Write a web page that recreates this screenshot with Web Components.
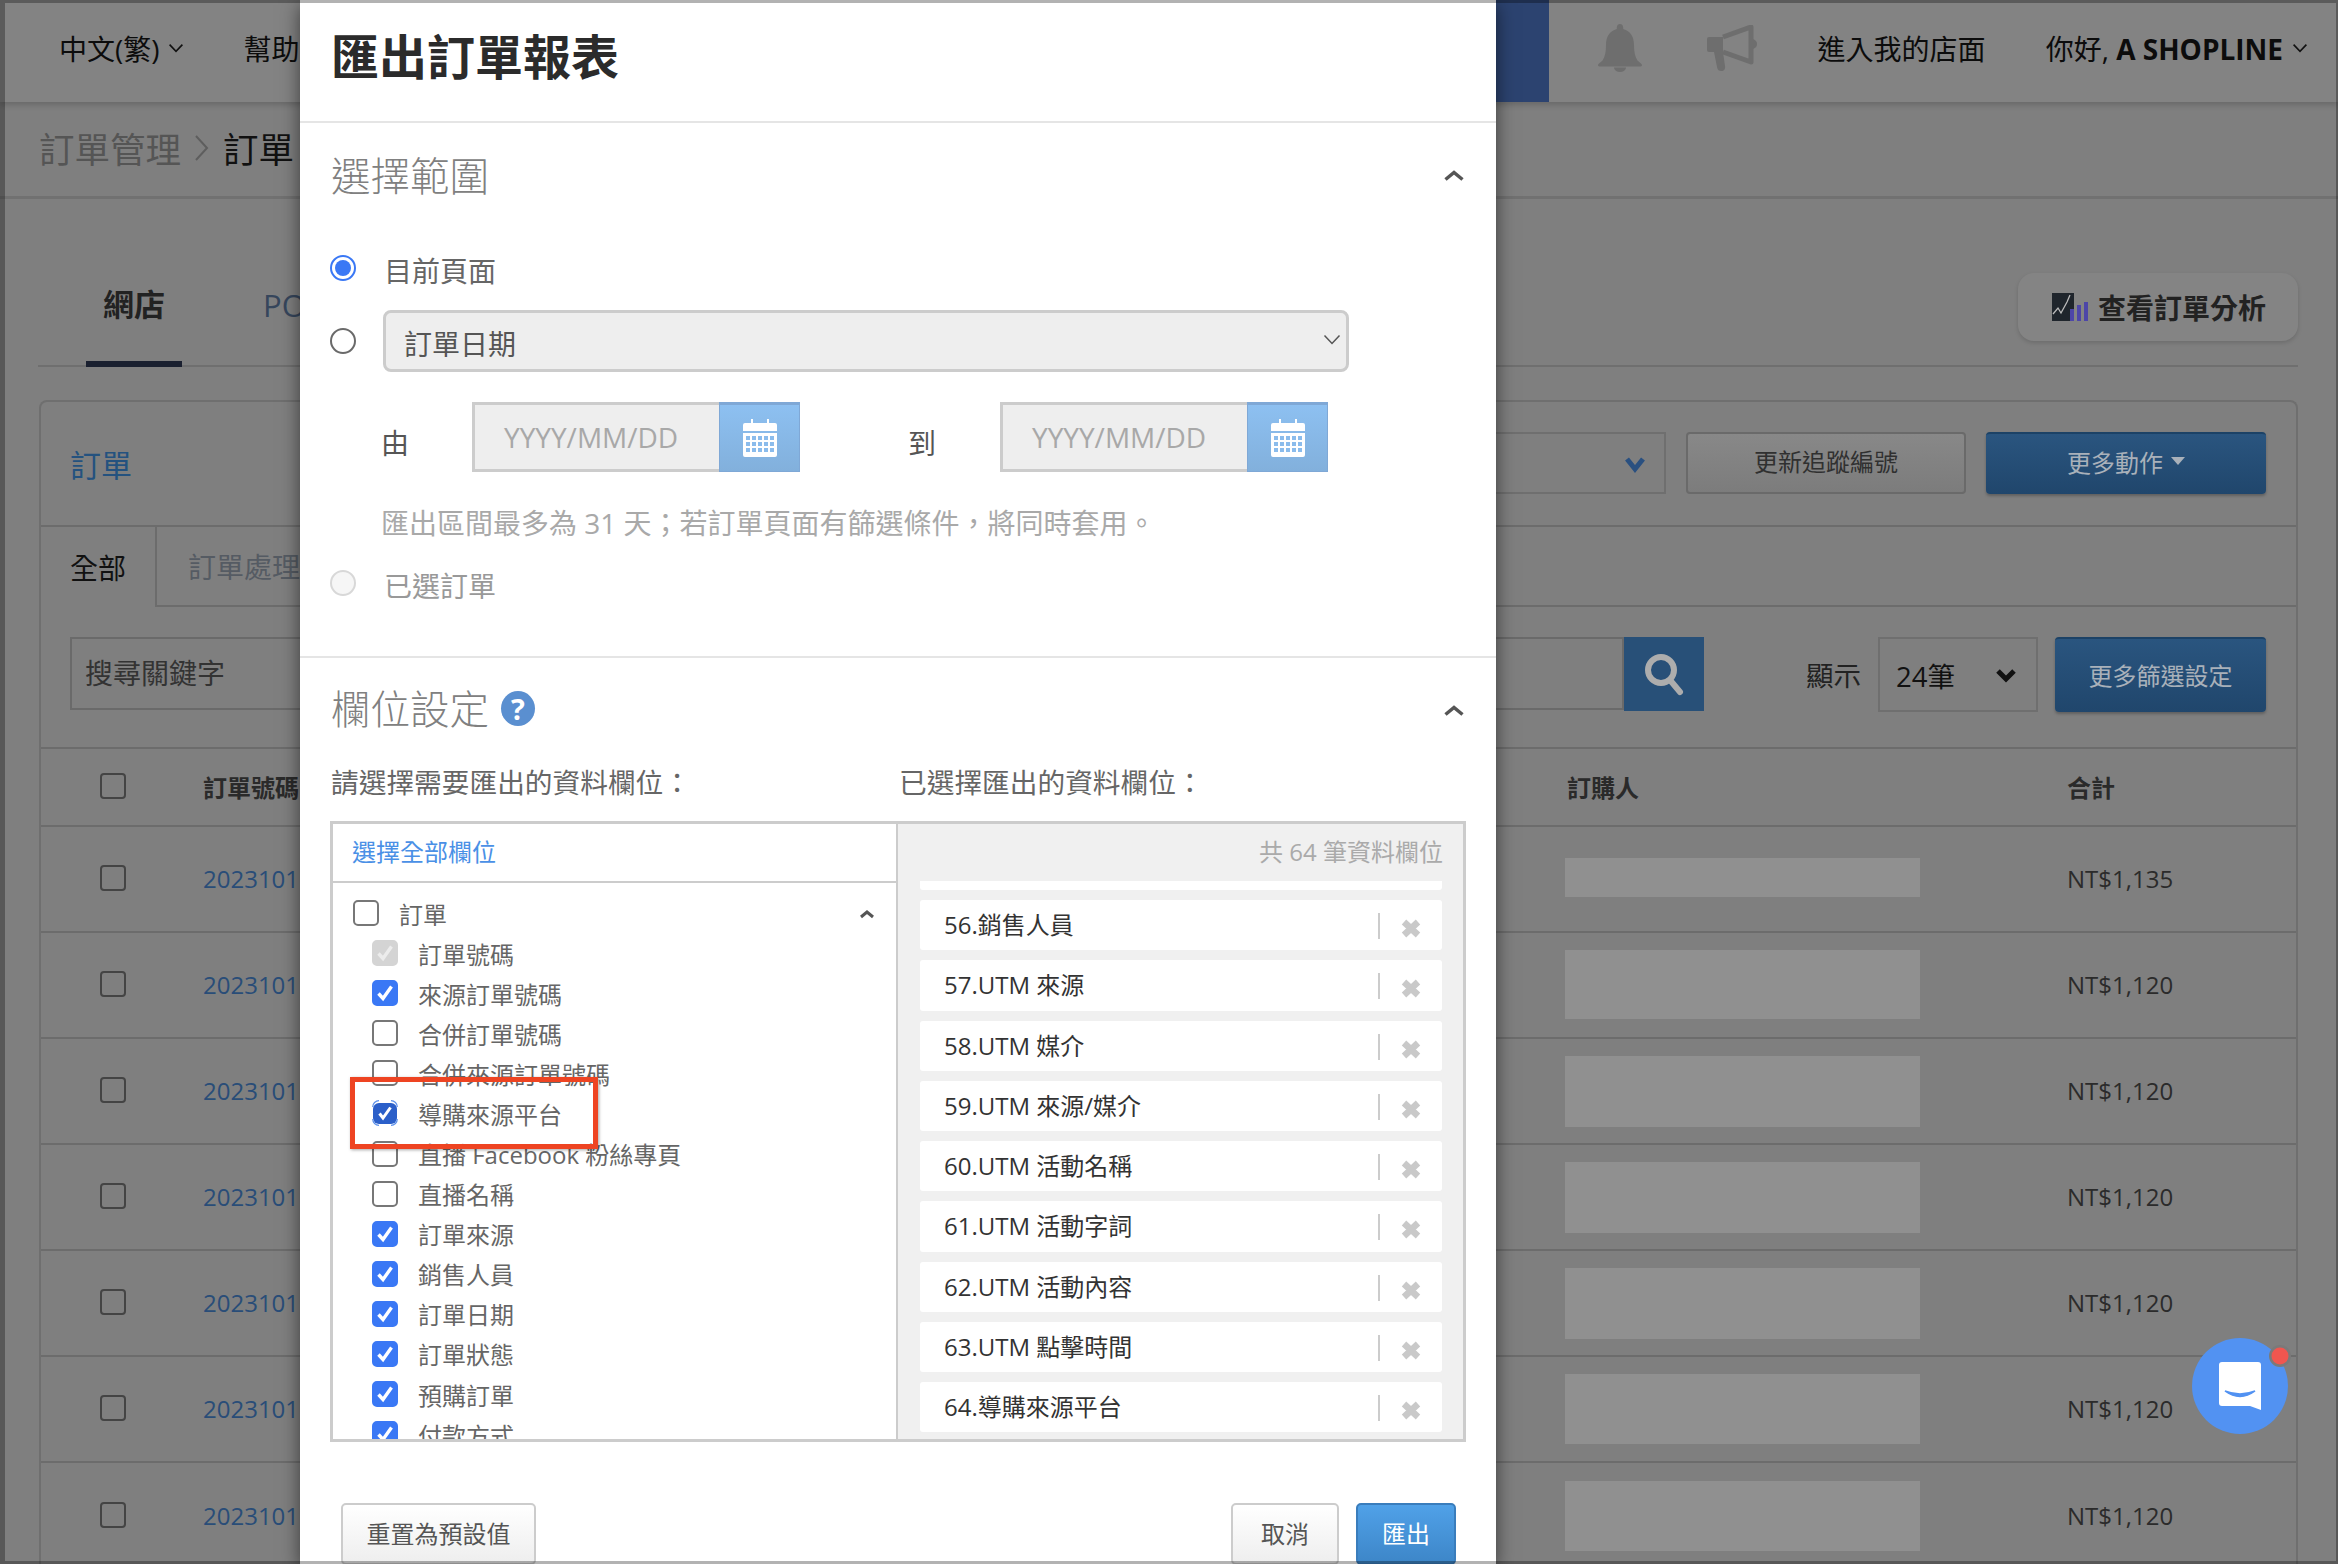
<!DOCTYPE html>
<html lang="zh-Hant">
<head>
<meta charset="utf-8">
<title>匯出訂單報表</title>
<style>
html,body{margin:0;padding:0;width:2338px;height:1564px;overflow:hidden;background:#7f7f7f}
body{font-family:"Open Sans","Noto Sans CJK TC",sans-serif;font-size:28px;color:#222;position:relative}
</style>
</head>
<body>
<shop-page></shop-page>
<export-modal></export-modal>
<chat-bubble></chat-bubble>
<red-mark></red-mark>
<window-frame></window-frame>
<script>
function def(name, css, html){
  customElements.define(name, class extends HTMLElement{
    connectedCallback(){
      if(this.shadowRoot) return;
      const r=this.attachShadow({mode:'open'});
      r.innerHTML=`<style>:host{display:block;box-sizing:border-box}*{box-sizing:border-box}${css}</style>`+(typeof html==='function'?html(this):html);
    }
  });
}
const chev=(w,h,c,sw,up)=>`<svg width="${w}" height="${h}" viewBox="0 0 ${w} ${h}" style="display:block;flex:none"><path d="${up?`M${sw} ${h-sw}L${w/2} ${sw}L${w-sw} ${h-sw}`:`M${sw} ${sw}L${w/2} ${h-sw}L${w-sw} ${sw}`}" fill="none" stroke="${c}" stroke-width="${sw}"/></svg>`;
const cal=`<svg width="34" height="38" viewBox="0 0 34 38" style="display:block"><path d="M8 0h2v5H8zM24 0h2v5h-2z" fill="#fff"/><path d="M0 6a2 2 0 0 1 2-2h30a2 2 0 0 1 2 2v6H0zM0 14h34v22a2 2 0 0 1-2 2H2a2 2 0 0 1-2-2z" fill="#fff"/><g fill="#8bbcec">${[17,23,29].map(y=>[3,9,15,21,27].map(x=>`<rect x="${x}" y="${y}" width="4" height="4"/>`).join('')).join('')}</g></svg>`;

/* ---------- background page ---------- */
def('top-bar',`
:host{height:102px;padding-bottom:6px;background:#838383;display:flex;align-items:center;box-shadow:0 3px 6px rgba(0,0,0,.18);position:relative;color:#0c0c0c;font-size:28px}
.lang{margin-left:59px;display:flex;align-items:center;gap:8px}
.help{margin-left:60px;width:120px;white-space:nowrap}
.sp{flex:1}
.blue{width:100px;height:102px;background:#2c4370;align-self:flex-start}
.bell{margin-left:49px}.horn{margin-left:65px}
.store{margin-left:61px}
.hello{margin-left:60px;display:flex;align-items:center;gap:9px;margin-right:30px}
b{font-weight:700}
`,()=>`
<div class="lang">中文(繁)${chev(16,10,'#111',1.6)}</div><div class="help">幫助</div><div class="sp"></div><div class="blue"></div>
<svg class="bell" width="44" height="48" viewBox="0 0 44 48"><path d="M22 0c-2 0-3.200 1.600-3.200 3.500v1.600C11.500 7 8 13 8 21c0 7-1 12-3.500 15.500C2.800 38.500 0 39.500 0 41c0 1 1 1.500 2 1.500h40c1 0 2-.5 2-1.500 0-1.500-2.800-2.500-4.500-4.500C37 33 36 28 36 21c0-8-3.500-14-10.800-15.900V3.500C25.200 1.600 24 0 22 0z" fill="#6e6e6e"/><path d="M16 43.500a6 4.500 0 0 0 12 0z" fill="#6e6e6e"/></svg>
<svg class="horn" width="50" height="46" viewBox="0 0 50 46"><path d="M2 12h14v15H2a2 2 0 0 1-2-2V14a2 2 0 0 1 2-2z" fill="#6e6e6e"/><path d="M16 12 44 2v35L16 27" fill="none" stroke="#6e6e6e" stroke-width="5" stroke-linejoin="round"/><path d="M46 14c3 1 4 3 4 5s-1 4-4 5z" fill="#6e6e6e"/><path d="M7 27h9l2 14c.5 3-1 5-3.500 5-2.500 0-4-1-4.500-4z" fill="#6e6e6e"/></svg>
<div class="store">進入我的店面</div>
<div class="hello"><span>你好, <b>A SHOPLINE</b></span>${chev(16,10,'#111',1.6)}</div>`);

def('crumb-bar',`
:host{height:97px;border-bottom:3px solid #717171;display:flex;align-items:center;padding-left:39px;font-size:35.500px;color:#555;padding-bottom:3px}
svg{margin:0 13px 0 13px}
.c{color:#111}
`,`<span>訂單管理</span><svg width="16" height="28" viewBox="0 0 16 28"><path d="M2 2l11 12L2 26" fill="none" stroke="#5e5e5e" stroke-width="2"/></svg><span class="c">訂單</span>`);

def('store-tabs',`
:host{height:168px;margin:0 40px 0 38px;border-bottom:2px solid #6f6f6f;display:flex;align-items:flex-end;font-size:31px}
.t{height:92px;border-bottom:6px solid #1a2030;line-height:58px;width:96px;margin-left:48px;text-align:center;font-weight:700;color:#222;margin-bottom:-2px}
.p{margin-left:81px;height:90px;line-height:60px;color:#36465c;white-space:nowrap}
.a{margin-left:auto;align-self:flex-start;margin-top:74px;width:280px;height:68px;border-radius:16px;background:#848484;box-shadow:0 2px 4px rgba(0,0,0,.15);display:flex;align-items:center;padding-left:34px;gap:10px;font-size:28px;font-weight:700;color:#222}
`,`<div class="t">網店</div><div class="p">POS</div>
<div class="a"><svg width="36" height="28" viewBox="0 0 36 28" style="flex:none"><rect width="22" height="28" fill="#1f252c"/><path d="M1 21l5-6 3 5 6-11 3-7" fill="none" stroke="#bbb" stroke-width="1.300"/><path d="M18 16h4v12h-4zM25 12h4v16h-4zM32 9h4v19h-4z" fill="#4d46a8"/></svg><span>查看訂單分析</span></div>`);

def('order-row',`
:host{height:106px;border-bottom:2px solid #6c6c6c;display:grid;grid-template-columns:162px 1362px 502px 1fr;align-items:center;font-size:24px;color:#2b2b2b}
:host(:last-child){border-bottom:none}
.n{color:#294d78}
.c1{padding-left:59px;margin-top:-2px}
.n,.tt{margin-top:-2px}
.r{width:355px;background:#909090}
`,h=>`<div class="c1"><page-check></page-check></div><div class="n">2023101</div><div><div class="r" style="height:${h.getAttribute('h')}px;margin-top:${h.getAttribute('o')||0}px"></div></div><div class="tt">${h.getAttribute('total')}</div>`);

def('page-check',`:host{width:26px;height:26px;border:2px solid #444;border-radius:4px}`,``);

def('order-card',`
:host{margin:33px 40px 0 39px;border:2px solid #6f6f6f;border-bottom:none;border-radius:8px 8px 0 0;font-size:24px}
.h{height:125px;border-bottom:2px solid #6c6c6c;display:flex;align-items:center;padding:0 30px 2px 29px}
.h .ti{font-size:31px;color:#24527f;width:500px;margin-top:2px}
.sel{flex:1;height:62px;border:2px solid #6f6f6f;display:flex;align-items:center;justify-content:flex-end;padding-right:16px;padding-top:2px}
.btn{height:62px;width:280px;border-radius:4px;display:flex;align-items:center;justify-content:center;flex:none;padding-bottom:5px}
.ghost{margin-left:20px;border:2px solid #6a6a6a;color:#303030;background:linear-gradient(#888,#7c7c7c)}
.pri{background:linear-gradient(#2a557f,#20466c);color:#a9b1ba;border-top:2px solid #1c4266;box-shadow:0 2px 3px rgba(0,0,0,.25)}
.more{margin-left:20px;gap:8px}
.tabs{height:80px;display:flex;font-size:28px}
.on{width:116px;border-right:2px solid #6c6c6c;padding-left:29px;line-height:82px;color:#111;flex:none}
.off{flex:1;border-bottom:2px solid #6c6c6c;padding-left:31px;line-height:80px;color:#555b63}
.s{height:142px;border-bottom:2px solid #6c6c6c;display:flex;align-items:flex-start;padding:30px 30px 0 29px}
.inp{flex:1;height:73px;border:2px solid #6a6a6a;font-size:28px;color:#333;display:flex;align-items:center;padding-left:13px;padding-bottom:3px}
.go{width:80px;height:74px;background:#285078;flex:none;display:flex;align-items:center;justify-content:center}
.show{font-size:27.500px;margin-left:102px;height:74px;display:flex;align-items:center;color:#222}
.dd{width:160px;height:75px;margin-left:17px;border:2px solid #6f6f6f;display:flex;align-items:center;justify-content:space-between;padding:0 17px 0 16px;font-size:27.500px;color:#111}
.f{width:211px;height:75px;margin-left:17px;padding-bottom:3px}
.th{height:78px;border-bottom:2px solid #6c6c6c;display:grid;grid-template-columns:162px 1362px 502px 1fr;align-items:center;font-weight:700;color:#2a2a2a;padding-bottom:2px}
`,`
<div class="h"><div class="ti">訂單</div><div class="sel">${chev(26,20,'#2a5080',5)}</div><div class="btn ghost">更新追蹤編號</div><div class="btn pri more">更多動作<svg width="14" height="8" viewBox="0 0 14 8"><path d="M0 0h14L7 8z" fill="#a9b1ba"/></svg></div></div>
<div class="tabs"><div class="on">全部</div><div class="off">訂單處理</div></div>
<div class="s"><div class="inp">搜尋關鍵字</div><div class="go"><svg width="40" height="44" viewBox="0 0 40 44"><circle cx="17" cy="18" r="13" fill="none" stroke="#adadad" stroke-width="6"/><path d="M26 28l10 12" stroke="#adadad" stroke-width="6" stroke-linecap="round"/></svg></div>
<div class="show">顯示</div><div class="dd"><span>24筆</span>${chev(26,18,'#111',5)}</div><div class="btn pri f">更多篩選設定</div></div>
<div class="th"><div style="padding-left:59px"><page-check></page-check></div><div>訂單號碼</div><div style="padding-left:2px">訂購人</div><div>合計</div></div>
<order-row h="39" o="-4" total="NT$1,135"></order-row>
<order-row h="69" o="-2" total="NT$1,120"></order-row>
<order-row h="71" total="NT$1,120"></order-row>
<order-row h="71" total="NT$1,120"></order-row>
<order-row h="71" total="NT$1,120"></order-row>
<order-row h="70" total="NT$1,120"></order-row>
<order-row h="70" total="NT$1,120"></order-row>`);

def('shop-page',`:host{width:2338px;height:1564px;overflow:hidden}`,`<top-bar></top-bar><crumb-bar></crumb-bar><store-tabs></store-tabs><order-card></order-card>`);

/* ---------- modal ---------- */
def('radio-dot',`
:host{flex:none;width:26px;height:26px;border-radius:50%;border:2px solid #6a6a6a;background:#fff}
:host([on]){border-color:#3a78f5;padding:3px}
:host([off]){border-color:#d8d8d8;background:#f6f6f6}
i{display:block;width:100%;height:100%;border-radius:50%;background:#3a78f5}
`,h=>h.hasAttribute('on')?'<i></i>':'');

def('date-field',`
:host{display:flex;flex:none;height:70px}
.i{width:247px;background:#eee;border:3px solid #ccc;border-right:none;font-size:28px;color:#a8a8a8;display:flex;align-items:center;padding-left:29px}
.b{width:81px;background:linear-gradient(#8dc0f1,#82b0dc);border:1px solid #7fa8d6;border-top:3px solid #7fa8d6;display:flex;align-items:center;justify-content:center}
`,`<div class="i">YYYY/MM/DD</div><div class="b">${cal}</div>`);

def('tree-item',`
:host{height:40.1px;display:flex;align-items:center;padding-left:39px;font-size:24px;color:#666;white-space:nowrap;gap:20px}
:host([top]){padding-left:20px;height:40px}
.c{flex:none;width:26px;height:26px;border-radius:5px;border:2px solid #777;background:#fff;position:relative}
:host([v]) .c{background:#3a78f5;border-color:#3a78f5}
:host([d]) .c{background:#d4d4d4;border-color:#d4d4d4}
:host([f]) .c{background:#2b5fc9;border:none;width:24px;height:21px;margin:0 1px;border-radius:6px}
.c svg{position:absolute;left:-2px;top:-2px}
:host([f]) .c svg{left:-1px;top:-2.500px}
.cv{margin-left:auto;margin-right:20px;margin-top:3px}
`,h=>{
 const on=h.hasAttribute('v')||h.hasAttribute('d')||h.hasAttribute('f');
 const col=h.hasAttribute('d')?'#ececec':'#fff';
 const f=h.hasAttribute('f');
 return `<div class="c">${on?`<svg width="26" height="26" viewBox="0 0 26 26"><path d="${f?'M7.500 13.500l3.500 4.500 7.500-10.500':'M6.500 13.500l4.500 5 8.500-12'}" fill="none" stroke="${col}" stroke-width="${f?3:3.400}"/></svg>`:''}${f?`<svg width="26" height="26" viewBox="0 0 26 26"><path d="M.7 7A6.300 6.300 0 0 1 7 .7M19 .7A6.300 6.300 0 0 1 25.300 7M25.300 19A6.300 6.300 0 0 1 19 25.300M7 25.300A6.300 6.300 0 0 1 .7 19" fill="none" stroke="#5b8fea" stroke-width="1.200"/></svg>`:''}</div><slot></slot>${h.hasAttribute('top')?`<span class="cv">${chev(18,11,'#555',3,true)}</span>`:''}`;
});

def('pick-item',`
:host{height:50.25px;margin-bottom:10px;background:#fff;border-radius:3px;display:flex;align-items:center;padding:0 0 3px 24px;font-size:24px;color:#333;flex:none}
.s{margin-left:auto;width:2px;height:26px;background:#ccc;margin-top:5px}
svg{margin:10px 21px 0 21px}
`,`<span><slot></slot></span><div class="s"></div><svg width="20" height="19" viewBox="0 0 20 19"><path d="M3 3l14 13M17 3L3 16" stroke="#c9c9c9" stroke-width="6.500"/></svg>`);

def('field-box',`
:host{margin:19px 30px 0 30px;height:621px;border:3px solid #ccc;display:grid;grid-template-columns:565px 1fr}
.l{border-right:2px solid #ccc;display:flex;flex-direction:column;overflow:hidden;min-height:0;height:615px}
.all{height:59px;border-bottom:2px solid #ccc;flex:none;display:flex;align-items:center;padding-left:19px;font-size:24px;color:#4a90e6;padding-bottom:5px}
.tree{padding-top:10px;overflow:hidden;flex:1}
.r{background:#f0f0f0;display:flex;flex-direction:column;height:615px;overflow:hidden}
.cnt{height:57px;flex:none;display:flex;align-items:center;justify-content:flex-end;padding:0 20px 5px 0;font-size:24px;color:#aaa}
.list{padding:0 21px 0 22px;overflow:hidden;display:flex;flex-direction:column;flex:1}
.stub{height:9px;background:#fff;border-radius:0 0 3px 3px;margin-bottom:10px;flex:none}
`,`
<div class="l"><div class="all">選擇全部欄位</div><div class="tree">
<tree-item top>訂單</tree-item>
<tree-item d>訂單號碼</tree-item>
<tree-item v>來源訂單號碼</tree-item>
<tree-item>合併訂單號碼</tree-item>
<tree-item>合併來源訂單號碼</tree-item>
<tree-item f>導購來源平台</tree-item>
<tree-item>直播 Facebook 粉絲專頁</tree-item>
<tree-item>直播名稱</tree-item>
<tree-item v>訂單來源</tree-item>
<tree-item v>銷售人員</tree-item>
<tree-item v>訂單日期</tree-item>
<tree-item v>訂單狀態</tree-item>
<tree-item v>預購訂單</tree-item>
<tree-item v>付款方式</tree-item>
</div></div>
<div class="r"><div class="cnt">共 64 筆資料欄位</div><div class="list"><div class="stub"></div>
<pick-item>56.銷售人員</pick-item>
<pick-item>57.UTM 來源</pick-item>
<pick-item>58.UTM 媒介</pick-item>
<pick-item>59.UTM 來源/媒介</pick-item>
<pick-item>60.UTM 活動名稱</pick-item>
<pick-item>61.UTM 活動字詞</pick-item>
<pick-item>62.UTM 活動內容</pick-item>
<pick-item>63.UTM 點擊時間</pick-item>
<pick-item>64.導購來源平台</pick-item>
</div></div>`);

def('sec-title',`
:host{height:104px;display:flex;align-items:center;padding:0 30px 2px 31px;font-size:39.500px;font-weight:300;color:#808080}
:host([q]){height:98px;padding-bottom:0}
.q{margin-left:12px;margin-top:2px;width:34px;height:35px;border-radius:50%;background:#5a8fd0;color:#fff;font-size:29px;font-weight:700;display:flex;align-items:center;justify-content:center;flex:none}
.cv{margin-left:auto;margin-top:3px}
:host([q]) .cv{margin-top:7px}
`,h=>`<slot></slot>${h.hasAttribute('q')?'<span class="q">?</span>':''}<span class="cv">${chev(24,14,'#555',3.500,true)}</span>`);

def('export-modal',`
:host{position:absolute;left:300px;top:0;width:1196px;height:1564px;background:#fff;overflow:hidden;box-shadow:0 5px 18px rgba(0,0,0,.55);color:#666;font-size:28px}
.head{height:123px;border-bottom:2px solid #e5e5e5;display:flex;align-items:center;padding:0 31px 8px;font-size:48px;font-weight:700;color:#2b2b2b;line-height:1}
.sec1{height:535px;border-bottom:2px solid #e5e5e5}
.row{display:flex;align-items:center;padding-left:30px}
.r1{height:50px;margin-top:16px;gap:28px}.r1 span{padding-top:3px}
.r2{height:62px;margin-top:17px;gap:27px}
.sel{width:966px;height:62px;background:#eee;border:3px solid #ccc;border-radius:8px;display:flex;align-items:center;justify-content:space-between;padding:3px 5px 0 18px;color:#555}
.sel svg{margin-top:-6px}
.r3{height:70px;margin-top:30px;padding-left:81px}
.t{padding-top:10px;flex:none;color:#555}
.from{width:91px}
.to{margin-left:108px;width:92px}
.hint{margin-top:31px;height:40px;line-height:40px;padding-left:81px;color:#a9a9a9;white-space:nowrap}
.r4{height:40px;margin-top:20px;gap:28px;color:#999}.r4 span{padding-top:3px}
.labels{display:grid;grid-template-columns:568px 1fr;padding-left:31px;height:40px;line-height:40px;margin-top:6px;font-size:27.700px}
.foot{margin-top:61px;display:flex;padding:0 40px 0 41px;gap:17px;font-size:24px}
.b{height:62px;border-radius:5px;border:2px solid #ccc;background:linear-gradient(#fff,#eee);display:flex;align-items:center;justify-content:center;color:#555;padding-bottom:3px}
.rs{width:195px;margin-right:auto}.cc{width:108px}
.ex{width:100px;background:linear-gradient(#50a1e8,#3d86c8);border-color:#3a7dbc;color:#fff}
`,`
<div class="head">匯出訂單報表</div>
<div class="sec1">
 <sec-title>選擇範圍</sec-title>
 <div class="row r1"><radio-dot on></radio-dot><span>目前頁面</span></div>
 <div class="row r2"><radio-dot></radio-dot><div class="sel"><span>訂單日期</span>${chev(18,11,'#555',1.500)}</div></div>
 <div class="row r3"><span class="t from">由</span><date-field></date-field><span class="t to">到</span><date-field></date-field></div>
 <div class="hint">匯出區間最多為 31 天；若訂單頁面有篩選條件，將同時套用。</div>
 <div class="row r4"><radio-dot off></radio-dot><span>已選訂單</span></div>
</div>
<sec-title q>欄位設定</sec-title>
<div class="labels"><div>請選擇需要匯出的資料欄位：</div><div>已選擇匯出的資料欄位：</div></div>
<field-box></field-box>
<div class="foot"><div class="b rs">重置為預設值</div><div class="b cc">取消</div><div class="b ex">匯出</div></div>`);

/* ---------- overlays ---------- */
def('chat-bubble',`:host{position:absolute;left:2192px;top:1338px;width:96px;height:96px}svg{display:block}`,
`<svg width="96" height="96" viewBox="0 0 96 96" style="overflow:visible"><circle cx="48" cy="48" r="48" fill="#5292f2"/><path d="M30 24h36a3 3 0 0 1 3 3v45l-11-4H30a3 3 0 0 1-3-3V27a3 3 0 0 1 3-3z" fill="#fff"/><path d="M33 53q15 11 30 0q-15 6-30 0z" fill="#5292f2" stroke="#5292f2" stroke-width="1.500"/><circle cx="88" cy="18" r="11" fill="#7a7a7a"/><circle cx="88" cy="18" r="8.500" fill="#f0564f"/></svg>`);
def('red-mark',`:host{position:absolute;left:350px;top:1077px;width:248px;height:72px;border:5px solid #ee4422;box-shadow:1px 1px 3px rgba(0,0,0,.35)}`,``);
def('window-frame',`:host{position:absolute;inset:0;border-style:solid;border-color:rgba(0,0,0,.3);border-width:3px 2px 3px 5px;pointer-events:none}`,``);
</script>
</body>
</html>
